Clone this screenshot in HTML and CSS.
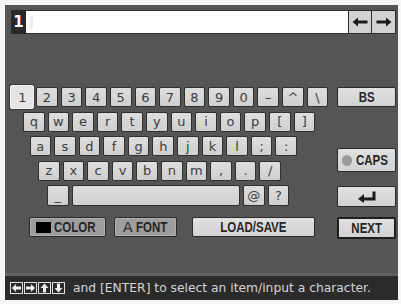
FILE: index.html
```html
<!DOCTYPE html>
<html>
<head>
<meta charset="utf-8">
<link rel="stylesheet" href="styles.css">
</head>
<body>
<div class="screen">
  <div class="panel">
    <div class="inputrow">
      <div class="num">1</div>
      <div class="field"><span class="cursor"></span></div>
      <div class="arrowbtn"><svg width="16" height="10" viewBox="0 0 16 10"><path d="M0.5 5 L6 0.5 L6 9.5 Z" fill="#1c1c1c"/><rect x="5" y="3.5" width="10.5" height="3" fill="#1c1c1c"/></svg></div>
      <div class="arrowbtn"><svg width="16" height="10" viewBox="0 0 16 10"><path d="M15.5 5 L10 0.5 L10 9.5 Z" fill="#1c1c1c"/><rect x="0.5" y="3.5" width="10.5" height="3" fill="#1c1c1c"/></svg></div>
    </div>
    <div class="board">
      <div class="left">
        <div class="row r1">
          <div class="key sel">1</div><div class="key">2</div><div class="key">3</div><div class="key">4</div><div class="key">5</div><div class="key">6</div><div class="key">7</div><div class="key">8</div><div class="key">9</div><div class="key">0</div><div class="key">–</div><div class="key">^</div><div class="key">\</div>
        </div>
        <div class="row r2">
          <div class="key">q</div><div class="key">w</div><div class="key">e</div><div class="key">r</div><div class="key">t</div><div class="key">y</div><div class="key">u</div><div class="key">i</div><div class="key">o</div><div class="key">p</div><div class="key">[</div><div class="key">]</div>
        </div>
        <div class="row r3">
          <div class="key">a</div><div class="key">s</div><div class="key">d</div><div class="key">f</div><div class="key">g</div><div class="key">h</div><div class="key">j</div><div class="key">k</div><div class="key">l</div><div class="key">;</div><div class="key">:</div>
        </div>
        <div class="row r4">
          <div class="key">z</div><div class="key">x</div><div class="key">c</div><div class="key">v</div><div class="key">b</div><div class="key">n</div><div class="key">m</div><div class="key">,</div><div class="key">.</div><div class="key">/</div>
        </div>
        <div class="row r5">
          <div class="key under">_</div><div class="key space"></div><div class="key at">@</div><div class="key">?</div>
        </div>
        <div class="btnrow">
          <div class="btn dark color"><span class="swatch"></span><span class="t tl">COLOR</span></div>
          <div class="btn dark font"><span class="afont">A</span><span class="t tl">FONT</span></div>
          <div class="btn light load"><span class="t">LOAD/SAVE</span></div>
        </div>
      </div>
      <div class="right">
        <div class="btn light side bs"><span class="t">BS</span></div>
        <div class="btn light side caps"><span class="dot"></span><span class="t tl">CAPS</span></div>
        <div class="btn light side enter"><svg width="20" height="12" viewBox="0 0 20 12"><path d="M1 8 L7 3 L7 12 Z" fill="#1c1c1c"/><path d="M17 0.5 V8 H6" fill="none" stroke="#1c1c1c" stroke-width="3"/></svg></div>
        <div class="btn light side next"><span class="t">NEXT</span></div>
      </div>
    </div>
  </div>
  <div class="status">
    <div class="icons">
      <span class="ib"><svg width="11" height="10" viewBox="0 0 11 10"><path d="M1 5 L5 1 L5 9 Z" fill="#eee"/><rect x="4" y="3.5" width="6" height="3" fill="#eee"/></svg></span>
      <span class="ib"><svg width="11" height="10" viewBox="0 0 11 10"><path d="M10 5 L6 1 L6 9 Z" fill="#eee"/><rect x="1" y="3.5" width="6" height="3" fill="#eee"/></svg></span>
      <span class="ib"><svg width="11" height="10" viewBox="0 0 11 10"><path d="M5.5 0.5 L1.5 5 L9.5 5 Z" fill="#eee"/><rect x="4" y="4" width="3" height="5.5" fill="#eee"/></svg></span>
      <span class="ib"><svg width="11" height="10" viewBox="0 0 11 10"><path d="M5.5 9.5 L1.5 5 L9.5 5 Z" fill="#eee"/><rect x="4" y="0.5" width="3" height="5.5" fill="#eee"/></svg></span>
    </div>
    <span class="msg">and [ENTER] to select an item/input a character.</span>
  </div>
</div>
</body>
</html>
```

FILE: styles.css
```css
html, body {
  margin: 0;
  padding: 0;
  background: #f6f6f6;
}
.screen {
  width: 393px;
  margin: 5px 0 0 5px;
}
.panel {
  background: #555555;
  height: 268px;
  display: flex;
  flex-direction: column;
  border-bottom: 3px solid #626262;
}
.inputrow {
  display: flex;
  height: 24px;
  margin: 5px 0 0 6px;
  width: 385px;
}
.num {
  width: 15px;
  background: #282828;
  color: #fff;
  font: bold 15px "DejaVu Sans", sans-serif;
  display: flex;
  align-items: center;
  justify-content: center;
}
.field {
  flex: 1;
  background: #fff;
  border-top: 1px solid #333;
  border-bottom: 1px solid #333;
  position: relative;
}
.cursor {
  position: absolute;
  left: 4px;
  top: 5px;
  width: 3px;
  height: 13px;
  background: #ececec;
}
.arrowbtn {
  width: 22px;
  background: #d2d2d2;
  border: 1px solid #2c2c2c;
  display: flex;
  align-items: center;
  justify-content: center;
}
.arrowbtn + .arrowbtn {
  border-left: none;
  width: 23px;
}
.board {
  display: flex;
  justify-content: space-between;
  margin-top: 53px;
}
.left {
  display: flex;
  flex-direction: column;
  gap: 4.6px;
}
.row {
  display: flex;
  gap: 3px;
  height: 20px;
}
.r1 { padding-left: 6.5px; }
.r2 { padding-left: 18px; }
.r3 { padding-left: 24.5px; }
.r4 { padding-left: 33px; }
.r5 { padding-left: 42px; height: 21px; }
.key {
  width: 21.6px;
  box-sizing: border-box;
  background: linear-gradient(#dedede, #cfcfcf);
  border: 1px solid #2f2f2f;
  border-radius: 2px;
  color: #3c3c3c;
  font: 13px "DejaVu Sans", sans-serif;
  display: flex;
  align-items: center;
  justify-content: center;
  line-height: 1;
}
.key.sel {
  width: 24px;
  height: 24px;
  margin: -2px -1.2px;
  background: #e4e4e4;
  border: 1px solid #f4f4f4;
  box-shadow: 0 0 0 1px #3a3a3a;
  position: relative;
}
.key.under { align-items: flex-end; padding-bottom: 3px; }
.key.space { width: 168px; margin-left: 0.4px; }
.btnrow {
  display: flex;
  padding-left: 24px;
  margin-top: 6.4px;
  height: 20px;
}
.btn {
  box-sizing: border-box;
  border: 1px solid #2a2a2a;
  border-radius: 2px;
  display: flex;
  align-items: center;
  justify-content: center;
  font: bold 14px "Liberation Sans", sans-serif;
  color: #262626;
}
.t {
  display: inline-block;
  transform: scaleX(0.82);
}
.t.tl {
  transform-origin: left center;
}
.btn.dark {
  background: #9d9d9d;
  box-shadow: inset 0 0 0 1px #b0b0b0;
}
.btn.light {
  background: linear-gradient(#e0e0e0, #d2d2d2);
}
.color {
  width: 77px;
  justify-content: flex-start;
  padding-left: 6px;
}
.font {
  width: 63px;
  margin-left: 8px;
  justify-content: flex-start;
  padding-left: 8px;
}
.load { width: 123px; margin-left: 15px; }
.swatch {
  width: 16px;
  height: 11px;
  background: #000;
  margin-right: 3px;
}
.afont {
  font: 14px "DejaVu Sans", sans-serif;
  margin-right: 3px;
}
.right {
  width: 59px;
  margin-right: 2px;
  display: flex;
  flex-direction: column;
}
.side { width: 59px; }
.bs { height: 20px; }
.caps {
  height: 24px;
  margin-top: 41px;
  justify-content: flex-start;
  padding-left: 4px;
}
.dot {
  width: 11px;
  height: 11px;
  border-radius: 50%;
  background: #9b9b9b;
  margin-right: 4px;
}
.enter { height: 21px; margin-top: 14px; }
.next { height: 22px; margin-top: 10px; border: 2px solid #1e1e1e; }
.status {
  height: 24px;
  background: #2b2b2b;
  display: flex;
  align-items: center;
  padding-left: 5px;
}
.icons {
  display: flex;
  gap: 1px;
}
.ib {
  width: 13px;
  height: 12px;
  box-sizing: border-box;
  border: 1px solid #e0e0e0;
  display: flex;
  align-items: center;
  justify-content: center;
}
.msg {
  margin-left: 8px;
  color: #d4d4d4;
  font: 12.3px "DejaVu Sans", sans-serif;
  white-space: nowrap;
}
```
